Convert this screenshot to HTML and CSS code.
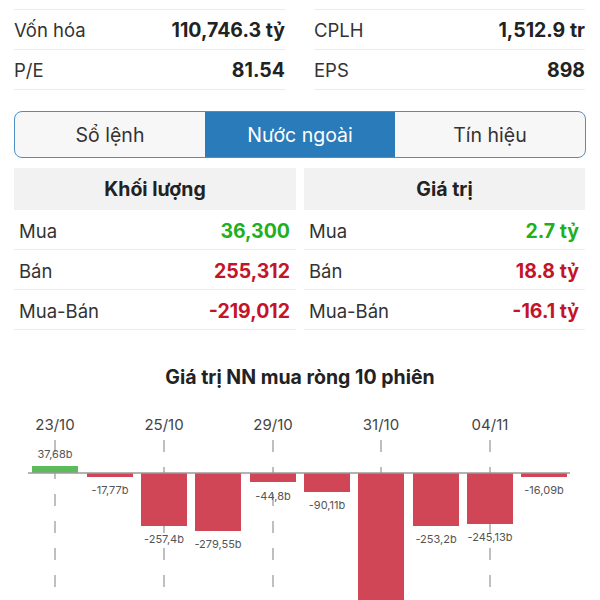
FILE: index.html
```html
<!DOCTYPE html>
<html>

<head>
	<title>Nước ngoài</title>
	<meta charset="UTF-8">
	<meta name="viewport" content="width=device-width, initial-scale=1.0">
	<link rel="stylesheet" href="styles.css">
</head>

<body>
	<div class="page">
		<section class="stats">
			<div class="stat-col">
				<div class="stat-row cut"><span>Giá trị GD</span><b>52.3 tỷ</b></div>
				<div class="stat-row"><span>Vốn hóa</span><b>110,746.3 tỷ</b></div>
				<div class="stat-row"><span>P/E</span><b>81.54</b></div>
			</div>
			<div class="stat-col">
				<div class="stat-row cut"><span>Thay đổi</span><b>1.2 tỷ</b></div>
				<div class="stat-row"><span>CPLH</span><b>1,512.9 tr</b></div>
				<div class="stat-row"><span>EPS</span><b>898</b></div>
			</div>
		</section>

		<nav class="tabs">
			<div class="tab">Sổ lệnh</div>
			<div class="tab active">Nước ngoài</div>
			<div class="tab">Tín hiệu</div>
		</nav>

		<section class="foreign">
			<div class="f-col">
				<div class="f-head">Khối lượng</div>
				<div class="f-row"><span>Mua</span><b class="up">36,300</b></div>
				<div class="f-row"><span>Bán</span><b class="down">255,312</b></div>
				<div class="f-row"><span>Mua-Bán</span><b class="down">-219,012</b></div>
			</div>
			<div class="f-col">
				<div class="f-head">Giá trị</div>
				<div class="f-row"><span>Mua</span><b class="up">2.7 tỷ</b></div>
				<div class="f-row"><span>Bán</span><b class="down">18.8 tỷ</b></div>
				<div class="f-row"><span>Mua-Bán</span><b class="down">-16.1 tỷ</b></div>
			</div>
		</section>

		<h2 class="chart-title">Giá trị NN mua ròng 10 phiên</h2>

		<svg class="chart" width="600" height="220" viewBox="0 0 600 220">
			<!-- date labels -->
			<g class="dates">
				<text x="55" y="38">23/10</text>
				<text x="164" y="38">25/10</text>
				<text x="273" y="38">29/10</text>
				<text x="381" y="38">31/10</text>
				<text x="490" y="38">04/11</text>
			</g>
			<!-- dashed guides -->
			<g class="guides">
				<line x1="55" y1="48" x2="55" y2="220" />
				<line x1="164" y1="48" x2="164" y2="220" />
				<line x1="273" y1="48" x2="273" y2="220" />
				<line x1="381" y1="48" x2="381" y2="220" />
				<line x1="490" y1="48" x2="490" y2="220" />
			</g>
			<!-- bars -->
			<rect class="bar-up" x="32" y="74" width="46" height="7" />
			<g class="bar-down">
				<rect x="87" y="81" width="46" height="4" />
				<rect x="141" y="81" width="46" height="53" />
				<rect x="195" y="81" width="46" height="58" />
				<rect x="250" y="81" width="46" height="9" />
				<rect x="304" y="81" width="46" height="19" />
				<rect x="358" y="81" width="46" height="160" />
				<rect x="413" y="81" width="46" height="53" />
				<rect x="467" y="81" width="46" height="51" />
				<rect x="521" y="81" width="46" height="4" />
			</g>
			<line class="axis" x1="28" y1="81" x2="570" y2="81" />
			<!-- values -->
			<g class="vals">
				<text x="55" y="66">37,68b</text>
				<text x="110" y="102">-17,77b</text>
				<text x="164" y="151">-257,4b</text>
				<text x="218" y="156">-279,55b</text>
				<text x="273" y="108">-44,8b</text>
				<text x="327" y="117">-90,11b</text>
				<text x="436" y="151">-253,2b</text>
				<text x="490" y="149">-245,13b</text>
				<text x="544" y="102">-16,09b</text>
			</g>
		</svg>
	</div>
</body>

</html>
```

FILE: styles.css
```css
* {
	box-sizing: border-box;
}

body {
	font-family: "Inter", "Roboto", sans-serif;
	margin: 0;
	padding: 0;
	background: #fff;
	color: #222;
	overflow: hidden;
}

.page {
	width: 600px;
	height: 600px;
	overflow: hidden;
}

.stats {
	display: grid;
	grid-template-columns: 271px 271px;
	column-gap: 29px;
	padding: 0 14px;
	margin-top: -30px;
}

.stat-row {
	display: flex;
	justify-content: space-between;
	align-items: center;
	height: 40px;
	border-bottom: 1px solid #ececec;
	font-size: 18.5px;
}

.stat-row.cut {
	padding-bottom: 9px;
}

.stat-row span {
	color: #333;
}

.stat-row b {
	font-weight: 700;
	font-size: 19.5px;
	color: #222;
}

.tabs {
	display: flex;
	margin: 21px 14px 0;
	height: 47px;
	border: 1.5px solid #4f8ec2;
	border-radius: 8px;
	overflow: hidden;
	background: #f7f7f7;
}

.tab {
	flex: 1;
	display: flex;
	align-items: center;
	justify-content: center;
	font-size: 19.5px;
	color: #333;
}

.tab.active {
	background: #2a7bb9;
	color: #fff;
}

.foreign {
	display: grid;
	grid-template-columns: 282px 281px;
	column-gap: 8px;
	padding: 0 15px 0 14px;
	margin-top: 10px;
}

.f-head {
	height: 42px;
	display: flex;
	align-items: center;
	justify-content: center;
	background: #f2f2f2;
	font-size: 19.5px;
	font-weight: 700;
	color: #222;
}

.f-row {
	display: flex;
	justify-content: space-between;
	align-items: center;
	height: 40px;
	padding: 3px 6px 0 5px;
	border-bottom: 1px solid #ececec;
	font-size: 18.5px;
}

.f-row span {
	color: #333;
}

.f-row b {
	font-weight: 700;
	font-size: 19.5px;
}

.up {
	color: #1faf1f;
}

.down {
	color: #c4142a;
}

.chart-title {
	margin: 36px 0 0;
	height: 22px;
	line-height: 22px;
	text-align: center;
	font-size: 19.5px;
	font-weight: 700;
	color: #222;
}

.chart {
	display: block;
	margin-top: 4px;
}

.dates text {
	font-size: 15px;
	fill: #444;
	text-anchor: middle;
}

.guides line {
	stroke: #aaa;
	stroke-width: 1.5;
	stroke-dasharray: 12 15;
}

.bar-up {
	fill: #5cbb5a;
}

.bar-down rect {
	fill: #d04656;
}

.axis {
	stroke: #9a9a9a;
	stroke-width: 1.5;
}

.vals text {
	font-size: 11px;
	fill: #555;
	text-anchor: middle;
}
```
